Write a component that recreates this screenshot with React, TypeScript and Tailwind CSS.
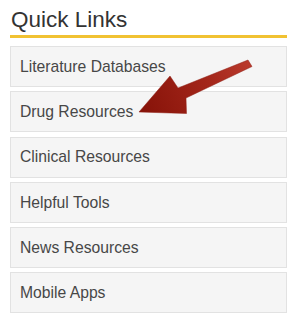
import React from 'react';

const links = [
  'Literature Databases',
  'Drug Resources',
  'Clinical Resources',
  'Helpful Tools',
  'News Resources',
  'Mobile Apps',
];

const Arrow: React.FC = () => (
  <svg
    className="absolute left-0 top-0 pointer-events-none"
    width="300"
    height="325"
    viewBox="0 0 300 325"
  >
    <defs>
      <linearGradient id="arrowFill" x1="140" y1="112" x2="252" y2="62" gradientUnits="userSpaceOnUse">
        <stop offset="0" stopColor="#861208" />
        <stop offset="0.6" stopColor="#a3261a" />
        <stop offset="1" stopColor="#bb3b2e" />
      </linearGradient>
    </defs>
    <polygon
      points="248,60 252,66.5 186,98 186.5,113.5 139,112 170,76 178,88"
      fill="url(#arrowFill)"
      stroke="#8e1c12"
      strokeWidth="0.5"
      strokeLinejoin="round"
    />
  </svg>
);

const App: React.FC = () => {
  return (
    <div className="relative w-[300px] h-[325px] bg-white overflow-hidden" style={{ fontFamily: '"Liberation Sans", Arial, sans-serif' }}>
      <div className="ml-[10px] w-[277px]">
        <div className="pt-[6px] pb-[2px] pl-[1px] border-b-[3px] border-[#f1c232]">
          <h1 className="text-[22.5px] leading-[27px] text-[#333333]">Quick Links</h1>
        </div>
        <ul className="mt-[8px] flex flex-col gap-[4.3px]">
          {links.map((label) => (
            <li
              key={label}
              className="h-[41px] flex items-center pl-[9px] bg-[#f5f5f5] border border-[#e2e2e2] text-[15.7px] text-[#474747]"
            >
              {label}
            </li>
          ))}
        </ul>
      </div>
      <Arrow />
    </div>
  );
};

export default App;
